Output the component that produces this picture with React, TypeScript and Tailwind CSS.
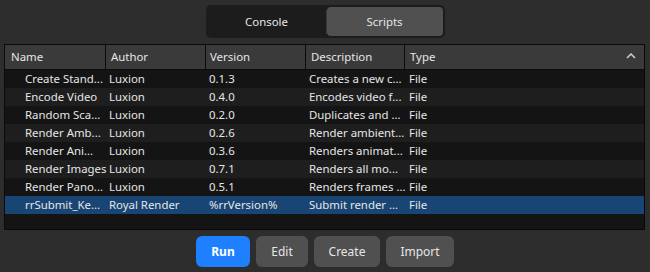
import React from "react";

const rows = [
  ["Create Stand...", "Luxion", "0.1.3", "Creates a new c...", "File"],
  ["Encode Video", "Luxion", "0.4.0", "Encodes video f...", "File"],
  ["Random Sca...", "Luxion", "0.2.0", "Duplicates and ...", "File"],
  ["Render Amb...", "Luxion", "0.2.6", "Render ambient...", "File"],
  ["Render Ani...", "Luxion", "0.3.6", "Renders animat...", "File"],
  ["Render Images", "Luxion", "0.7.1", "Renders all mo...", "File"],
  ["Render Pano...", "Luxion", "0.5.1", "Renders frames ...", "File"],
  ["rrSubmit_Ke...", "Royal Render", "%rrVersion%", "Submit render ...", "File"],
];

export default function App() {
  return (
    <div
      className="w-[650px] h-[272px] bg-[#2d2d2d] text-[#e6e6e6] text-[11.4px] flex flex-col items-center overflow-hidden"
      style={{ fontFamily: '"Noto Sans", "Open Sans", sans-serif' }}
    >
      <div className="mt-[5px] w-[239px] h-[33px] bg-[#1c1c1c] rounded-[5px] flex items-center p-[2px]">
        <div className="flex-1 h-full flex items-center justify-center">Console</div>
        <div className="w-px h-[24px] bg-[#3a3a3a]" />
        <div className="w-[116px] h-full bg-[#505050] rounded-[4px] flex items-center justify-center">
          Scripts
        </div>
      </div>
      <div className="mt-[6px] w-[641px] h-[186px] border border-[#0a0a0a] bg-[#141414] flex flex-col self-start ml-[4px]">
        <div className="h-[25px] bg-[#3a3a3a] border-b border-[#0a0a0a] flex items-center">
          <div className="w-[101px] h-full pl-[6px] flex items-center border-r border-[#0a0a0a]">Name</div>
          <div className="w-[100px] h-full pl-[5px] flex items-center border-r border-[#0a0a0a]">Author</div>
          <div className="w-[100px] h-full pl-[4px] flex items-center border-r border-[#0a0a0a]">Version</div>
          <div className="w-[99px] h-full pl-[5px] flex items-center border-r border-[#0a0a0a]">Description</div>
          <div className="flex-1 h-full pl-[5px] pr-[8px] flex items-center justify-between">
            <span>Type</span>
            <svg width="10" height="6" viewBox="0 0 10 6" className="mt-[-2px]">
              <path d="M1 5 L5 1 L9 5" stroke="#d0d0d0" strokeWidth="1.5" fill="none" />
            </svg>
          </div>
        </div>
        {rows.map((r, i) => (
          <div
            key={i}
            className={
              "h-[18px] flex items-center " +
              (i === 7 ? "bg-[#184573]" : i % 2 === 0 ? "bg-[#141414]" : "bg-[#1e1e1e]")
            }
          >
            <div className="w-[102px] pl-[20px] whitespace-nowrap">{r[0]}</div>
            <div className="w-[100px] pl-[2px] whitespace-nowrap">{r[1]}</div>
            <div className="w-[100px] pl-[2px] whitespace-nowrap">{r[2]}</div>
            <div className="w-[100px] pl-[2px] whitespace-nowrap">{r[3]}</div>
            <div className="flex-1 pl-[2px]">{r[4]}</div>
          </div>
        ))}
      </div>
      <div className="mt-[6px] flex gap-[6px] text-[12px]">
        <button className="w-[54px] h-[31px] rounded-[6px] bg-[#1e80ff] text-white font-bold">Run</button>
        <button className="w-[52px] h-[31px] rounded-[6px] bg-[#505050] text-[#e6e6e6]">Edit</button>
        <button className="w-[66px] h-[31px] rounded-[6px] bg-[#505050] text-[#e6e6e6]">Create</button>
        <button className="w-[68px] h-[31px] rounded-[6px] bg-[#505050] text-[#e6e6e6]">Import</button>
      </div>
    </div>
  );
}
